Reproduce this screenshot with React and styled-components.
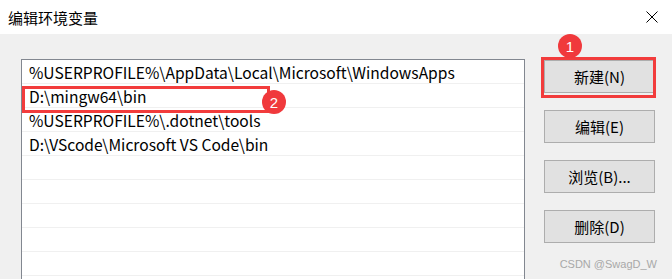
import React from "react"
import styled, { createGlobalStyle } from "styled-components"

const GlobalStyle = createGlobalStyle`
  html, body {
    margin: 0;
    padding: 0;
    background: #f0f0f0;
  }
  body {
    font-family: "Noto Sans", "Noto Sans CJK SC", sans-serif;
  }
`

const Window = styled.div`
  width: 672px;
  height: 279px;
  overflow: hidden;
  background: #f0f0f0;
  display: flex;
  flex-direction: column;
`

const TitleBar = styled.div`
  height: 34px;
  flex: none;
  background: #fff;
  display: flex;
  align-items: center;
  padding-left: 8px;
  padding-right: 14px;
`

const Title = styled.span`
  font-family: "Noto Sans CJK SC", sans-serif;
  font-size: 15px;
  color: #000;
  line-height: 1;
`

const Close = styled.svg`
  margin-left: auto;
  width: 12px;
  height: 12px;
`

const Body = styled.div`
  display: flex;
  align-items: flex-start;
  padding: 25px 0 0 21px;
`

const ListBox = styled.div`
  width: 504px;
  box-sizing: border-box;
  border: 1px solid #828790;
  background: #fff;
  height: 260px;
`

const Row = styled.div`
  position: relative;
  height: 24px;
  box-sizing: border-box;
  border-bottom: 1px solid #f0f0f0;
  padding-left: 7px;
  display: flex;
  align-items: center;
  font-family: "Noto Sans CJK SC", sans-serif;
  font-size: 15.6px;
  color: #000;
  white-space: nowrap;
`

const Buttons = styled.div`
  display: flex;
  flex-direction: column;
  gap: 17px;
  margin-left: 19px;
  padding-top: 1px;
`

const ButtonWrap = styled.div`
  position: relative;
`

const Button = styled.button`
  width: 111px;
  height: 33px;
  box-sizing: border-box;
  border: 1px solid #adadad;
  background: #e1e1e1;
  font-family: "Noto Sans CJK SC", sans-serif;
  font-size: 15px;
  color: #000;
  padding: 0;
`

const Highlight = styled.div`
  position: absolute;
  left: ${p => p.$left}px;
  top: ${p => p.$top}px;
  width: ${p => p.$width}px;
  height: ${p => p.$height}px;
  box-sizing: border-box;
  border: 3px solid #f23c3c;
  pointer-events: none;
`

const Badge = styled.div`
  position: absolute;
  left: ${p => p.$left}px;
  top: ${p => p.$top}px;
  width: 24px;
  height: 24px;
  border-radius: 50%;
  background: #f0393c;
  color: #fff;
  font-family: "Liberation Sans", sans-serif;
  font-size: 15px;
  display: flex;
  align-items: center;
  justify-content: center;
`

const Watermark = styled.div`
  margin-top: -4px;
  margin-right: -2px;
  font-family: "Liberation Sans", sans-serif;
  font-size: 11px;
  line-height: 16px;
  color: #a8a8a8;
  text-align: right;
  white-space: nowrap;
`

const paths = [
  "%USERPROFILE%\\AppData\\Local\\Microsoft\\WindowsApps",
  "D:\\mingw64\\bin",
  "%USERPROFILE%\\.dotnet\\tools",
  "D:\\VScode\\Microsoft VS Code\\bin",
  "",
  "",
  "",
  "",
  "",
  "",
]

const App = () => (
  <Window>
    <GlobalStyle />
    <TitleBar>
      <Title>编辑环境变量</Title>
      <Close viewBox="0 0 12 12">
        <path d="M0.5 0.5 L11.5 11.5 M11.5 0.5 L0.5 11.5" stroke="#000" strokeWidth="1" fill="none" />
      </Close>
    </TitleBar>
    <Body>
      <ListBox>
        {paths.map((p, i) => (
          <Row key={i}>
            {p}
            {i === 1 && (
              <>
                <Highlight $left={0} $top={2} $width={248} $height={27} />
                <Badge $left={240} $top={6}>2</Badge>
              </>
            )}
          </Row>
        ))}
      </ListBox>
      <Buttons>
        <ButtonWrap>
          <Button>新建(N)</Button>
          <Highlight $left={-3} $top={-3} $width={115} $height={41} />
          <Badge $left={14} $top={-26}>1</Badge>
        </ButtonWrap>
        <Button>编辑(E)</Button>
        <Button>浏览(B)...</Button>
        <Button>删除(D)</Button>
        <Watermark>CSDN @SwagD_W</Watermark>
      </Buttons>
    </Body>
  </Window>
)

export default App
